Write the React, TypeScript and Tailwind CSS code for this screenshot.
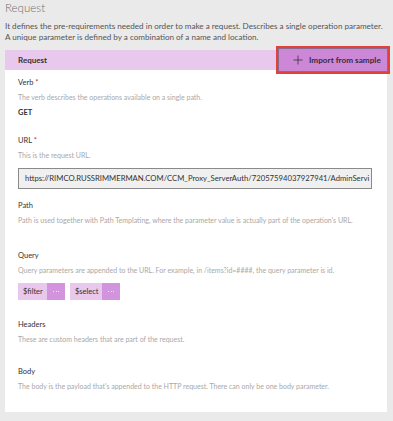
import React from 'react';

const Field: React.FC<{ label: string; required?: boolean; desc: string; children?: React.ReactNode; className?: string }> = ({
  label,
  required,
  desc,
  children,
  className = '',
}) => (
  <div className={className}>
    <div className="text-[7.5px] leading-[12px] text-[#333]">
      {label}
      {required && <span className="text-[#c0392b]"> *</span>}
    </div>
    <div className="mt-[2px] whitespace-nowrap text-[7px] leading-[12px] text-[#a8a8a8]">{desc}</div>
    {children}
  </div>
);

const Chip: React.FC<{ label: string; w: string }> = ({ label, w }) => (
  <div className="flex h-[17px] text-[7.5px] text-[#333]">
    <div className={`flex items-center bg-[#e8c8ec] pl-[5px] ${w}`}>{label}</div>
    <div className="flex w-[18px] items-center justify-center gap-[1.5px] bg-[#d294dc]">
      <span className="h-[1px] w-[1px] bg-[#f3e4f5]" />
      <span className="h-[1px] w-[1px] bg-[#f3e4f5]" />
      <span className="h-[1px] w-[1px] bg-[#f3e4f5]" />
    </div>
  </div>
);

export default function App() {
  return (
    <div
      className="h-[421px] w-[393px] overflow-hidden bg-[#eaeaea] px-[5px]"
      style={{ fontFamily: 'Lato, "Liberation Sans", sans-serif' }}
    >
      <div className="pt-[1px] text-[11.5px] leading-[14px] font-light text-[#6f6f6f]">Request</div>
      <div className="mt-[6px] whitespace-nowrap text-[8.1px] leading-[11px] text-[#555]">
        It defines the pre-requirements needed in order to make a request. Describes a single operation parameter.
        <br />
        A unique parameter is defined by a combination of a name and location.
      </div>
      <div className="mt-[7px] h-[362px] w-[382px] bg-white">
        <div className="flex h-[20px] items-center justify-between bg-[#e8c8ec]">
          <div className="pl-[13px] text-[8px] font-bold text-[#333]">Request</div>
          <div className="mr-[-3px] border-2 border-[#e0413a]">
            <div className="flex h-[24px] w-[110px] items-center gap-[6px] whitespace-nowrap border border-[#8a6a8e] bg-[#cc88d6] pl-[14px] text-[8.2px] font-bold text-[#3a2a3c]">
              <svg width="10" height="10" viewBox="0 0 10 10" className="shrink-0">
                <path d="M5 0.5V9.5M0.5 5H9.5" stroke="#4a3a4c" strokeWidth="0.9" />
              </svg>
              Import from sample
            </div>
          </div>
        </div>
        <div className="px-[13px]">
          <Field className="pt-[7px]" label="Verb" required desc="The verb describes the operations available on a single path.">
            <div className="mt-[4px] text-[7.5px] leading-[12px] font-bold text-[#333]">GET</div>
          </Field>
          <Field className="pt-[16px]" label="URL" required desc="This is the request URL.">
            <div className="mt-[7px] flex h-[21px] w-[354px] items-center overflow-hidden whitespace-nowrap border border-[#8a8a8a] bg-[#f0f0f0] pl-[6px] text-[7.7px] text-[#333]">
              https://RIMCO.RUSSRIMMERMAN.COM/CCM_Proxy_ServerAuth/72057594037927941/AdminServi
            </div>
          </Field>
          <Field
            className="pt-[11px]"
            label="Path"
            desc="Path is used together with Path Templating, where the parameter value is actually part of the operation's URL."
          />
          <Field
            className="pt-[24px]"
            label="Query"
            desc="Query parameters are appended to the URL. For example, in /items?id=####, the query parameter is id."
          >
            <div className="mt-[7px] flex gap-[5px]">
              <Chip label="$filter" w="w-[29px]" />
              <Chip label="$select" w="w-[32px]" />
            </div>
          </Field>
          <Field className="pt-[19px]" label="Headers" desc="These are custom headers that are part of the request." />
          <Field
            className="pt-[21px]"
            label="Body"
            desc="The body is the payload that's appended to the HTTP request. There can only be one body parameter."
          />
        </div>
      </div>
    </div>
  );
}
